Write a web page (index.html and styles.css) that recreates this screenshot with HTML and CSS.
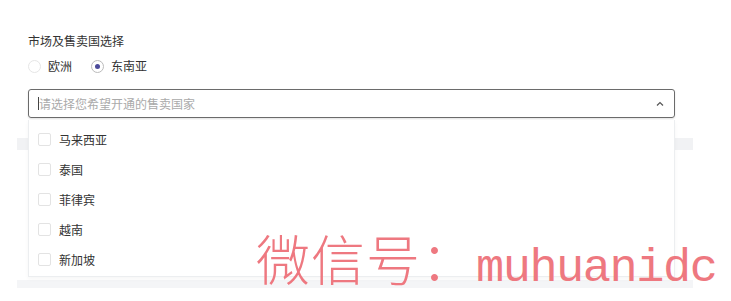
FILE: index.html
```html
<!DOCTYPE html>
<html lang="zh-CN">
<head>
<meta charset="utf-8">
<link rel="stylesheet" href="styles.css">
</head>
<body>
<div class="page">
  <div class="form">
    <div class="label">市场及售卖国选择</div>
    <div class="radios">
      <label class="radio"><span class="dot"></span>欧洲</label>
      <label class="radio checked"><span class="dot"></span>东南亚</label>
    </div>
    <div class="select">
      <span class="caret"></span>
      <span class="placeholder">请选择您希望开通的售卖国家</span>
      <svg class="chev" width="8" height="6" viewBox="0 0 8 6"><path d="M1 4.5 L4 1.5 L7 4.5" fill="none" stroke="#555" stroke-width="1.2"/></svg>
    </div>
  </div>
  <div class="under">
    <div class="band band1"></div>
    <div class="band band2"></div>
  </div>
  <ul class="dropdown">
    <li><span class="box"></span>马来西亚</li>
    <li><span class="box"></span>泰国</li>
    <li><span class="box"></span>菲律宾</li>
    <li><span class="box"></span>越南</li>
    <li><span class="box"></span>新加坡</li>
  </ul>
  <div class="watermark"><span class="cn">微信号：</span><span class="en">muhuanidc</span></div>
</div>
</body>
</html>
```

FILE: styles.css
```css
html, body {
  margin: 0;
  padding: 0;
  background: #fff;
  font-family: "Noto Sans CJK SC", "Noto Sans", sans-serif;
  color: #333;
}
.page {
  position: relative;
  width: 731px;
  height: 301px;
  overflow: hidden;
}
.form {
  padding: 33px 0 0 28px;
}
.label {
  font-size: 12px;
  line-height: 16px;
  color: #333;
}
.radios {
  display: flex;
  margin-top: 9px;
  height: 16px;
  align-items: center;
}
.radio {
  display: flex;
  align-items: center;
  font-size: 12px;
  line-height: 16px;
  color: #333;
  margin-right: 19px;
}
.radio .dot {
  width: 11px;
  height: 11px;
  border: 1px solid #e6e6e6;
  border-radius: 50%;
  margin-right: 7px;
  box-sizing: content-box;
  display: inline-flex;
  align-items: center;
  justify-content: center;
}
.radio.checked .dot {
  border-color: #bbb;
}
.radio.checked .dot::after {
  content: "";
  width: 5px;
  height: 5px;
  border-radius: 50%;
  background: #4b4a9a;
}
.select {
  margin-top: 15px;
  width: 647px;
  height: 29px;
  box-sizing: border-box;
  border: 1px solid #6b6b6b;
  border-radius: 3px;
  display: flex;
  align-items: center;
  padding: 0 10px 0 9px;
  box-shadow: 0 1px 2px rgba(0,0,0,0.12);
}
.caret {
  width: 1px;
  height: 13px;
  background: #444;
}
.placeholder {
  font-size: 12px;
  color: #aaa;
  flex: 1;
}
.chev {
  display: block;
}
.under {
  margin-left: 17px;
  width: 676px;
  margin-top: 20px;
}
.band {
  background: #f1f2f4;
}
.band1 {
  height: 12px;
}
.band2 {
  margin-top: 130px;
  height: 8px;
  background: #f4f5f7;
}
.dropdown {
  position: absolute;
  left: 28px;
  top: 120px;
  width: 647px;
  height: 157px;
  box-sizing: border-box;
  margin: 0;
  padding: 4px 0 0;
  list-style: none;
  background: #fff;
  border: 1px solid #eceef0;
  border-top: none;
  box-shadow: 0 2px 4px rgba(0,0,0,0.04);
}
.dropdown li {
  height: 30px;
  display: flex;
  align-items: center;
  padding-left: 9px;
  font-size: 12px;
  color: #333;
}
.box {
  width: 11px;
  height: 11px;
  border: 1px solid #e3e3e3;
  border-radius: 2px;
  margin-right: 8px;
}
.watermark {
  position: absolute;
  left: 256px;
  top: 226px;
  color: #ee7880;
  white-space: nowrap;
  line-height: 64px;
  display: flex;
  align-items: baseline;
}
.watermark .cn {
  font-family: "Noto Sans CJK SC", sans-serif;
  font-weight: 300;
  font-size: 54px;
  letter-spacing: 1px;
}
.watermark .en {
  font-family: "Liberation Mono", monospace;
  font-size: 47px;
  letter-spacing: -1.5px;
}
```
